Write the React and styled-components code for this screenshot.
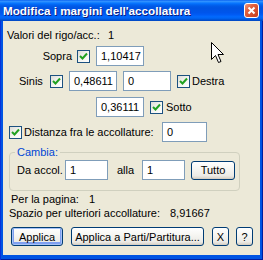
import React from 'react';
import styled, { createGlobalStyle } from 'styled-components';

const Global = createGlobalStyle`
  html, body { margin: 0; padding: 0; background: #ffffff; }
  #root { width: 263px; height: 260px; }
`;

const Window = styled.div`
  position: relative;
  width: 263px;
  height: 260px;
  display: flex;
  flex-direction: column;
  background: #0054e3;
  font-family: "Liberation Sans", Arial, sans-serif;
  font-size: 11px;
  color: #000;
  overflow: hidden;
`;

const TitleBar = styled.div`
  flex: none;
  height: 21px;
  display: flex;
  align-items: center;
  justify-content: space-between;
  padding: 0 4px 0 3px;
  background: linear-gradient(
    to bottom,
    #0058ee 0%,
    #3593ff 5%,
    #288eff 9%,
    #127dff 13%,
    #036ffc 18%,
    #0262ee 24%,
    #0057e5 32%,
    #0054e3 40%,
    #0055eb 60%,
    #005bf5 70%,
    #026afe 80%,
    #0062ef 88%,
    #0052d6 94%,
    #0046c0 100%
  );
`;

const Title = styled.span`
  color: #ffffff;
  font-family: "Liberation Sans", Arial, sans-serif;
  font-weight: 700;
  font-size: 11.7px;
  white-space: nowrap;
  text-shadow: 1px 1px 0 #0a1e80;
`;

const CloseBox = styled.div`
  width: 15px;
  height: 15px;
  flex: none;
  display: flex;
`;

const Frame = styled.div`
  flex: 1;
  display: flex;
  padding: 0 3px 5px 3px;
  box-shadow: inset 1px 0 0 #0831d9, inset -1px 0 0 #001ea0, inset 0 -1px 0 #001ea0;
`;

const Body = styled.div`
  flex: 1;
  display: flex;
  flex-direction: column;
  background: #ece9d8;
`;

const Row = styled.div`
  display: flex;
  align-items: center;
  flex: none;
  height: ${p => p.$h || 20}px;
  margin-top: ${p => p.$mt || 0}px;
  padding-left: ${p => p.$pl || 0}px;
`;

const Label = styled.span`
  flex: none;
  white-space: nowrap;
  line-height: 13px;
  box-sizing: border-box;
  width: ${p => (p.$w ? `${p.$w}px` : 'auto')};
  text-align: ${p => p.$align || 'left'};
  padding-left: ${p => p.$pl || 0}px;
  padding-right: ${p => p.$pr || 0}px;
  margin-left: ${p => p.$ml || 0}px;
`;

const Field = styled.div`
  flex: none;
  box-sizing: border-box;
  width: ${p => p.$w}px;
  height: ${p => p.$h || 20}px;
  margin-left: ${p => p.$ml || 0}px;
  border: 1px solid #7f9db9;
  background: #ffffff;
  padding-left: 4px;
  display: flex;
  align-items: center;
  overflow: hidden;
  white-space: nowrap;
`;

const Check = styled.div`
  flex: none;
  box-sizing: border-box;
  width: 13px;
  height: 13px;
  margin-left: ${p => p.$ml || 0}px;
  border: 1px solid #1c5180;
  background: linear-gradient(135deg, #dcdcd7 0%, #f4f4f0 50%, #ffffff 100%);
  display: flex;
  align-items: center;
  justify-content: center;
`;

const Group = styled.fieldset`
  margin: 4px 20px 0 6px;
  padding: 0 0 10px 0;
  border: 1px solid #d0d0bf;
  border-radius: 4px;
  min-width: 0;
`;

const Legend = styled.legend`
  margin-left: 5px;
  padding: 0 2px;
  color: #0046d5;
  line-height: 13px;
`;

const Button = styled.div`
  flex: none;
  box-sizing: border-box;
  width: ${p => p.$w}px;
  height: ${p => p.$h || 19}px;
  margin-left: ${p => p.$ml || 0}px;
  border: 1px solid #003c74;
  border-radius: 3px;
  background: linear-gradient(to bottom, #ffffff 0%, #f7f7f4 35%, #ecebe6 80%, #d6d0c5 100%);
  display: flex;
  align-items: center;
  justify-content: center;
  white-space: nowrap;
  box-shadow: ${p =>
    p.$default
      ? 'inset 0 0 0 1px #a6c2f7, inset 0 -1px 0 2px #7f9ff0'
      : 'inset 0 -1px 0 #d6d0c5'};
`;

const Cursor = styled.svg`
  position: absolute;
  left: 211px;
  top: 42px;
`;

const CheckMark = () => (
  <svg width="9" height="9" viewBox="0 0 9 9">
    <path d="M1 4 L3.5 6.5 L8 1.5" fill="none" stroke="#21a121" strokeWidth="2" />
  </svg>
);

const CloseIcon = () => (
  <svg width="15" height="15" viewBox="0 0 15 15">
    <defs>
      <linearGradient id="cg" x1="0" y1="0" x2="1" y2="1">
        <stop offset="0" stopColor="#f0a088" />
        <stop offset="0.35" stopColor="#e2613f" />
        <stop offset="1" stopColor="#c23a1c" />
      </linearGradient>
    </defs>
    <rect x="0.5" y="0.5" width="14" height="14" rx="2.5" fill="url(#cg)" stroke="#ffffff" />
    <path d="M4.5 4.5 L10.5 10.5 M10.5 4.5 L4.5 10.5" stroke="#ffffff" strokeWidth="2" />
  </svg>
);

export default function App() {
  return (
    <>
      <Global />
      <Window>
        <TitleBar>
          <Title>Modifica i margini dell'accollatura</Title>
          <CloseBox>
            <CloseIcon />
          </CloseBox>
        </TitleBar>
        <Frame>
          <Body>
            <Row $h={13} $mt={8} $pl={4}>
              <Label $w={101}>Valori del rigo/acc.:</Label>
              <Label>1</Label>
            </Row>

            <Row $mt={4}>
              <Label $w={69} $align="right">Sopra</Label>
              <Check $ml={5}><CheckMark /></Check>
              <Field $w={48} $ml={6}>1,10417</Field>
            </Row>

            <Row $mt={5}>
              <Label $w={47} $pl={16}>Sinis</Label>
              <Check><CheckMark /></Check>
              <Field $w={48} $ml={6}>0,48611</Field>
              <Field $w={48} $ml={6}>0</Field>
              <Check $ml={6}><CheckMark /></Check>
              <Label $ml={2}>Destra</Label>
            </Row>

            <Row $mt={6} $pl={93}>
              <Field $w={48}>0,36111</Field>
              <Check $ml={6}><CheckMark /></Check>
              <Label $ml={3}>Sotto</Label>
            </Row>

            <Row $mt={5} $pl={6}>
              <Check><CheckMark /></Check>
              <Label $w={140} $pl={2}>Distanza fra le accollature:</Label>
              <Field $w={45}>0</Field>
            </Row>

            <Group>
              <Legend>Cambia:</Legend>
              <Row $mt={1} $pl={7}>
                <Label $w={48}>Da accol.</Label>
                <Field $w={43}>1</Field>
                <Label $w={34} $pl={9}>alla</Label>
                <Field $w={43}>1</Field>
                <Button $w={44} $ml={6}>Tutto</Button>
              </Row>
            </Group>

            <Row $h={13} $mt={2} $pl={8}>
              <Label $w={78}>Per la pagina:</Label>
              <Label>1</Label>
            </Row>

            <Row $h={13} $mt={1} $pl={6}>
              <Label $w={161}>Spazio per ulteriori accollature:</Label>
              <Label>8,91667</Label>
            </Row>

            <Row $h={19} $mt={7} $pl={8}>
              <Button $w={52} $default>Applica</Button>
              <Button $w={133} $ml={8}>Applica a Parti/Partitura...</Button>
              <Button $w={17} $ml={8}>X</Button>
              <Button $w={17} $ml={7}>?</Button>
            </Row>
          </Body>
        </Frame>
        <Cursor width="14" height="22" viewBox="0 0 14 22">
          <path
            d="M0.5 0.5 L0.5 17.5 L4.5 13.5 L7.5 20.5 L10 19.5 L7 12.5 L12.5 12.5 Z"
            fill="#ffffff"
            stroke="#000000"
            strokeWidth="1"
            strokeLinejoin="miter"
          />
        </Cursor>
      </Window>
    </>
  );
}
